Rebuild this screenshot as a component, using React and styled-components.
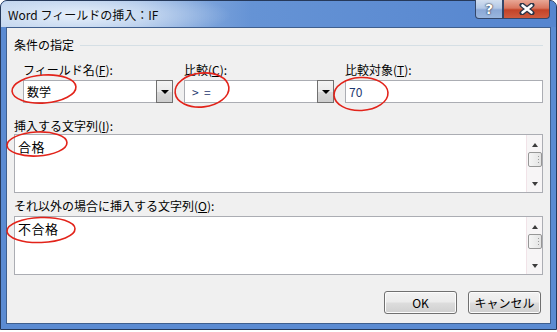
import React from 'react'
import styled, { createGlobalStyle } from 'styled-components'

const Global = createGlobalStyle`
  html, body { margin: 0; padding: 0; background: #fff; }
  body {
    font-family: "Noto Sans CJK JP", "Liberation Sans", sans-serif;
    font-size: 12px;
    color: #000;
  }
  * { box-sizing: border-box; }
`

const Window = styled.div`
  position: relative;
  width: 557px;
  height: 330px;
  border: 1px solid #26395a;
  border-radius: 7px 7px 0 0;
  background: #5b8bd2;
  padding: 0 5px 5px;
  display: flex;
  flex-direction: column;
`

const TitleBar = styled.div`
  height: 26px;
  margin: 0 -5px;
  padding: 0 5px 0 7px;
  display: flex;
  align-items: flex-start;
  border-radius: 6px 6px 0 0;
  background:
    radial-gradient(ellipse 150px 26px at 80px 14px, rgba(235, 243, 252, 0.95), rgba(235, 243, 252, 0) 100%),
    linear-gradient(to right, #b7cdea 0, #9bb9e3 140px, #6593d5 250px, #5585cf 100%);
`

const Title = styled.div`
  margin-top: 6px;
  line-height: 16px;
  font-size: 12px;
  color: #0b0b0b;
`

const Caption = styled.div`
  margin: -1px 1px 0 auto;
  display: flex;
`

const CapButton = styled.div`
  width: ${p => p.$w}px;
  height: 19px;
  display: flex;
  align-items: center;
  justify-content: center;
  border: 1px solid #34476a;
  border-top: none;
  border-radius: ${p => (p.$close ? '0 0 4px 0' : '0 0 0 4px')};
  background: ${p =>
    p.$close
      ? 'linear-gradient(#e8a796 0%, #d9765f 45%, #c34328 55%, #cf5b3f 100%)'
      : 'linear-gradient(#d2dff0 0%, #b3c8e6 45%, #8ba8d6 55%, #9ab6de 100%)'};
  color: #fff;
  font-weight: bold;
  font-size: 14px;
  line-height: 16px;
  font-family: "DejaVu Sans", sans-serif;
  text-shadow: 0 0 2px #1d2a40, 0 0 1px #1d2a40;
`

const Client = styled.div`
  flex: 1;
  background: #f0f0f0;
  border: 1px solid #3f5f8e;
  padding: 9px 7px 9px;
  display: flex;
  flex-direction: column;
`

const GroupHeader = styled.div`
  height: 16px;
  display: flex;
  align-items: center;
  line-height: 16px;
`

const GroupLine = styled.div`
  flex: 1;
  height: 1px;
  margin-left: 6px;
  background: #d5dfe5;
`

const FieldRow = styled.div`
  display: flex;
  gap: 11px;
  padding-left: 9px;
  margin-top: 9px;
`

const Field = styled.div`
  width: ${p => p.$w}px;
  display: flex;
  flex-direction: column;
`

const Label = styled.div`
  line-height: 16px;
  height: 16px;
  margin-top: ${p => p.$top || 0}px;
  white-space: nowrap;
`

const Box = styled.div`
  margin-top: 2px;
  height: 23px;
  border: 1px solid #abadb3;
  background: #fff;
  display: flex;
`

const BoxText = styled.div`
  flex: 1;
  padding-left: ${p => p.$pad || 3}px;
  line-height: 21px;
  white-space: pre;
  color: ${p => p.$color || '#000'};
`

const DropButton = styled.div`
  width: 17px;
  margin: -1px -1px -1px 0;
  border: 1px solid #707070;
  background: linear-gradient(#f4f4f4 0%, #e9e9e9 50%, #d9d9d9 51%, #cdcdcd 100%);
  display: flex;
  align-items: center;
  justify-content: center;

  &::after {
    content: '';
    border-left: 4px solid transparent;
    border-right: 4px solid transparent;
    border-top: 4px solid #000;
  }
`

const TextBox = styled.div`
  margin-top: ${p => p.$top || 0}px;
  height: 59px;
  border: 1px solid #abadb3;
  background: #fff;
  display: flex;
`

const TextContent = styled.div`
  flex: 1;
  padding: 4px 3px;
  font-size: 13px;
  line-height: 16px;
  letter-spacing: 0.5px;
`

const ScrollBar = styled.div`
  width: 16px;
  background: #f7f5f6;
  border-left: 1px solid #f1e3e8;
  display: flex;
  flex-direction: column;
  align-items: center;
  padding: 8px 0 6px;
`

const Arrow = styled.div`
  width: 0;
  height: 0;
  border-left: 3.5px solid transparent;
  border-right: 3.5px solid transparent;
  ${p => (p.$down ? 'border-top: 4px solid #3c3c3c;' : 'border-bottom: 4px solid #3c3c3c;')}
  margin-top: ${p => (p.$down ? 'auto' : '0')};
`

const Thumb = styled.div`
  margin-top: 5px;
  width: 14px;
  height: 15px;
  border: 1px solid #979797;
  border-radius: 2px;
  background: linear-gradient(to right, #f5f5f5, #e4e4e4);
  display: flex;
  align-items: center;
  justify-content: flex-end;
  padding-right: 2px;

  &::after {
    content: '';
    width: 1px;
    height: 7px;
    background: repeating-linear-gradient(#9a9a9a 0 1px, transparent 1px 3px);
  }
`

const ButtonRow = styled.div`
  margin-top: 16px;
  display: flex;
  justify-content: flex-end;
  gap: 11px;
  padding-right: 2px;
`

const Button = styled.div`
  width: 73px;
  height: 23px;
  border: 1px solid #707070;
  border-radius: 3px;
  background: linear-gradient(#f2f2f2 0%, #ebebeb 48%, #dddddd 52%, #cfcfcf 100%);
  box-shadow: inset 0 0 0 1px #fcfcfc;
  text-align: center;
  line-height: 21px;
`

const Notes = styled.svg`
  position: absolute;
  top: -1px;
  left: -1px;
  pointer-events: none;
`

const CloseGlyph = () => (
  <svg width="16" height="12" viewBox="0 0 16 12">
    <path d="M3 2 L13 10 M13 2 L3 10" stroke="#2a3447" strokeWidth="5" strokeLinecap="round" />
    <path d="M3.5 2.5 L12.5 9.5 M12.5 2.5 L3.5 9.5" stroke="#fff" strokeWidth="2.6" strokeLinecap="round" />
  </svg>
)

const circles = [
  { cx: 44, cy: 89, rx: 32, ry: 14, r: -4 },
  { cx: 202, cy: 90, rx: 27, ry: 17, r: -6 },
  { cx: 361, cy: 94, rx: 27, ry: 16.5, r: -3 },
  { cx: 37, cy: 144, rx: 30, ry: 12, r: -3 },
  { cx: 41, cy: 230, rx: 34, ry: 12.5, r: -2 },
]

const TextArea = ({ text, top }) => (
  <TextBox $top={top}>
    <TextContent>{text}</TextContent>
    <ScrollBar>
      <Arrow />
      <Thumb />
      <Arrow $down />
    </ScrollBar>
  </TextBox>
)

export default function App() {
  return (
    <>
      <Global />
      <Window>
        <TitleBar>
          <Title>Word フィールドの挿入：IF</Title>
          <Caption>
            <CapButton $w={28}>?</CapButton>
            <CapButton $w={47} $close>
              <CloseGlyph />
            </CapButton>
          </Caption>
        </TitleBar>
        <Client>
          <GroupHeader>
            条件の指定
            <GroupLine />
          </GroupHeader>
          <FieldRow>
            <Field $w={150}>
              <Label>フィールド名(<u>F</u>):</Label>
              <Box>
                <BoxText>数学</BoxText>
                <DropButton />
              </Box>
            </Field>
            <Field $w={150}>
              <Label>比較(<u>C</u>):</Label>
              <Box>
                <BoxText $pad={7} $color="#1d3770">{'>  ='}</BoxText>
                <DropButton />
              </Box>
            </Field>
            <Field $w={198}>
              <Label>比較対象(<u>T</u>):</Label>
              <Box>
                <BoxText $color="#1d3770">70</BoxText>
              </Box>
            </Field>
          </FieldRow>
          <Label $top={15}>挿入する文字列(<u>I</u>):</Label>
          <TextArea text="合格" />
          <Label $top={5}>それ以外の場合に挿入する文字列(<u>O</u>):</Label>
          <TextArea text="不合格" top={2} />
          <ButtonRow>
            <Button>OK</Button>
            <Button>キャンセル</Button>
          </ButtonRow>
        </Client>
        <Notes width="557" height="332" viewBox="0 0 557 332">
          {circles.map((c, i) => (
            <ellipse
              key={i}
              cx={c.cx}
              cy={c.cy}
              rx={c.rx}
              ry={c.ry}
              transform={`rotate(${c.r} ${c.cx} ${c.cy})`}
              fill="none"
              stroke="#e2231a"
              strokeWidth="1.6"
            />
          ))}
        </Notes>
      </Window>
    </>
  )
}
